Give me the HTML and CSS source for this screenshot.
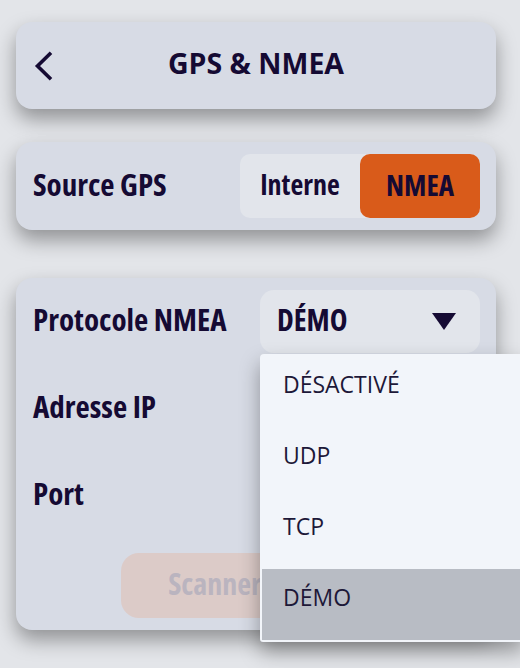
FILE: index.html
```html
<!DOCTYPE html>
<html lang="fr">
<head>
<meta charset="utf-8">
<title>GPS &amp; NMEA</title>
<link rel="stylesheet" href="styles.css">
</head>
<body>
<div class="screen">
  <header class="card topbar">
    <button class="back" aria-label="Retour">
      <svg width="20" height="30" viewBox="0 0 20 30"><path d="M18 1.8 L4.5 15 L18 28.2" fill="none" stroke="#150a33" stroke-width="3.6"/></svg>
    </button>
    <h1 class="title">GPS &amp; NMEA</h1>
    <span class="spacer"></span>
  </header>

  <section class="card source">
    <span class="label">Source GPS</span>
    <div class="segmented">
      <span class="seg">Interne</span>
      <span class="seg active">NMEA</span>
    </div>
  </section>

  <section class="card form">
    <div class="field">
      <span class="label">Protocole NMEA</span>
      <div class="select-wrap">
        <div class="select">
          <span>DÉMO</span>
          <svg width="24" height="17" viewBox="0 0 24 17"><polygon points="0,0 24,0 12,17" fill="#150a33"/></svg>
        </div>
        <ul class="menu">
          <li class="item">DÉSACTIVÉ</li>
          <li class="item">UDP</li>
          <li class="item">TCP</li>
          <li class="item selected">DÉMO</li>
        </ul>
      </div>
    </div>
    <div class="field">
      <span class="label">Adresse IP</span>
      <div class="input"></div>
    </div>
    <div class="field">
      <span class="label">Port</span>
      <div class="input"></div>
    </div>
    <div class="actions">
      <button class="scan" disabled>Scanner réseau</button>
    </div>
  </section>
</div>
</body>
</html>
```
FILE: styles.css
```css
* { box-sizing: border-box; }
html, body { margin: 0; padding: 0; }
body {
  background: #e3e5e9;
  font-family: "Open Sans", "Noto Sans", sans-serif;
  color: #150a33;
  width: 520px;
  height: 668px;
  overflow: hidden;
}
.screen {
  padding: 22px 24px 0 16px;
  display: flex;
  flex-direction: column;
}
.card {
  background: #d7dbe5;
  border-radius: 16px;
  box-shadow: 0 10px 20px rgba(0, 0, 0, 0.36);
}
.topbar {
  height: 87px;
  display: grid;
  grid-template-columns: 1fr auto 1fr;
  align-items: center;
  padding: 0 17px;
}
.back {
  justify-self: start;
  background: none;
  border: 0;
  padding: 0;
  width: 20px;
  height: 30px;
  display: flex;
}
.title {
  margin: 0;
  font-size: 28.5px;
  font-weight: 750;
  font-stretch: 90%;
  line-height: 40px;
  padding-bottom: 6px;
}
.label {
  font-size: 31px;
  font-weight: 750;
  font-stretch: 75%;
  line-height: 38px;
  padding-bottom: 5px;
}
.source {
  margin-top: 33px;
  height: 88px;
  display: flex;
  align-items: center;
  justify-content: space-between;
  padding: 12px 16px 12px 17px;
}
.segmented {
  display: grid;
  grid-template-columns: 120px 120px;
  height: 64px;
  background: #e2e5eb;
  border-radius: 10px;
}
.seg {
  display: flex;
  align-items: center;
  justify-content: center;
  font-size: 28px;
  font-weight: 750;
  font-stretch: 75%;
  padding-bottom: 4px;
  border-radius: 10px;
}
.seg.active { background: #d95b1a; font-size: 29px; }
.form {
  margin-top: 48px;
  padding: 12px 16px 12px 17px;
  display: flex;
  flex-direction: column;
  gap: 24px;
}
.field {
  height: 63px;
  display: flex;
  align-items: center;
  justify-content: space-between;
}
.select-wrap {
  position: relative;
  width: 220px;
  height: 63px;
}
.select, .input {
  width: 220px;
  height: 63px;
  background: #e2e5eb;
  border-radius: 14px;
}
.select {
  display: flex;
  align-items: center;
  justify-content: space-between;
  padding: 0 24px 4px 17px;
  font-size: 30px;
  font-weight: 750;
  font-stretch: 75%;
}
.select svg { margin-top: 4px; }
.menu {
  position: absolute;
  top: 64px;
  left: 0;
  width: 264px;
  margin: 0;
  padding: 2px;
  list-style: none;
  background: #f2f5fa;
  border-radius: 4px 0 0 3px;
  box-shadow: 0 10px 20px rgba(0, 0, 0, 0.34);
  z-index: 2;
}
.item {
  height: 71px;
  padding: 12px 21px 0;
  font-size: 23px;
  font-weight: 400;
  font-stretch: 92%;
  line-height: 32px;
  color: #1d1838;
}
.item.selected { background: #b8bcc4; }
.actions {
  margin-top: 2px;
  display: flex;
  justify-content: center;
}
.scan {
  width: 272px;
  height: 65px;
  border: 0;
  border-radius: 18px;
  background: #dccbc8;
  color: #bab4bf;
  font-family: inherit;
  font-size: 30px;
  font-weight: 750;
  font-stretch: 75%;
  padding: 0 0 4px;
}
```
